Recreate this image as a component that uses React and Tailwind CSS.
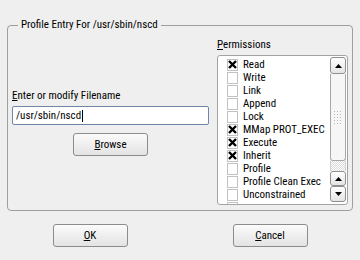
import React from "react";

const items = [
  ["Read", true],
  ["Write", false],
  ["Link", false],
  ["Append", false],
  ["Lock", false],
  ["MMap PROT_EXEC", true],
  ["Execute", true],
  ["Inherit", true],
  ["Profile", false],
  ["Profile Clean Exec", false],
  ["Unconstrained", false],
  ["", false],
];

function Check({ on }) {
  return (
    <div className="w-[11px] h-[12px] border border-[#c2c2c2] bg-white flex items-center justify-center shrink-0">
      {on && (
        <svg width="9" height="9" viewBox="0 0 9 9">
          <path d="M1 1L8 8M8 1L1 8" stroke="#000" strokeWidth="2.4" strokeLinecap="butt" />
        </svg>
      )}
    </div>
  );
}

function Arrow({ up }) {
  return (
    <svg width="7" height="4" viewBox="0 0 7 4">
      <polygon points={up ? "0,4 7,4 3.5,0" : "0,0 7,0 3.5,4"} fill="#000" />
    </svg>
  );
}

function Btn({ children, className = "" }) {
  return (
    <div
      className={
        "h-[23px] w-[75px] rounded-[3px] border border-[#8c8c8c] bg-gradient-to-b from-[#fbfbfb] to-[#e3e3e3] flex items-center justify-center " +
        className
      }
    >
      {children}
    </div>
  );
}

export default function App() {
  return (
    <div className="w-[360px] h-[260px] overflow-hidden bg-[#efefef] text-black text-[11px] leading-[13px] [font-family:'Roboto_Condensed','Liberation_Sans',sans-serif] pt-[19px] px-[7px]">
      <fieldset className="w-[346px] min-w-0 h-[192px] border border-[#9e9e9e] rounded-[4px] px-[4px] pb-[5px] m-0">
        <legend className="ml-[6px] px-[3px] leading-[12px]">Profile Entry For /usr/sbin/nscd</legend>
        <div className="flex h-full gap-[8px]">
          <div className="w-[197px] shrink-0 flex flex-col pt-[58px]">
            <div>
              <span className="underline">E</span>nter or modify Filename
            </div>
            <div className="mt-[4px] h-[19px] border border-[#6f86a6] rounded-[2px] bg-white flex items-center pl-[3px]">
              <span>/usr/sbin/nscd</span>
              <span className="ml-[1px] w-[1px] h-[12px] bg-black"></span>
            </div>
            <div className="mt-[8px] flex justify-center">
              <Btn className="w-[74px]">
                <span>
                  <span className="underline">B</span>rowse
                </span>
              </Btn>
            </div>
          </div>
          <div className="w-[131px] min-w-0 shrink-0 flex flex-col pt-[7px]">
            <div>
              <span className="underline">P</span>ermissions
            </div>
            <div className="mt-[4px] flex-1 min-h-0 border border-[#a3a3a3] rounded-[3px] bg-white flex overflow-hidden">
              <div className="flex-1 min-w-0 overflow-hidden pt-[2px] pl-[9px]">
                {items.map(([label, on], i) => (
                  <div key={i} className="h-[13px] flex items-center whitespace-nowrap">
                    <Check on={on} />
                    <span className="ml-[5px]">{label}</span>
                  </div>
                ))}
              </div>
              <div className="w-[16px] shrink-0 mt-[1px] mb-[2px] mr-[1px] flex flex-col">
                <div className="h-[17px] rounded-[3px] border border-[#8f8f8f] bg-gradient-to-b from-white to-[#e4e4e4] flex items-center justify-center">
                  <Arrow up />
                </div>
                <div className="h-[87px] rounded-b-[3px] border border-t-0 border-[#a8a8a8] bg-[#f6f6f6] flex items-center justify-center">
                  <div className="w-[10px] h-[14px] bg-[radial-gradient(circle,#b5b5b5_0.7px,transparent_0.8px)] bg-[length:3px_3px]"></div>
                </div>
                <div className="flex-1 border-x border-[#d0d0d0] bg-[repeating-conic-gradient(#dcdcdc_0_25%,#ffffff_0_50%)] bg-[length:2px_2px]"></div>
                <div className="h-[15px] rounded-[3px] border border-[#8f8f8f] bg-gradient-to-b from-white to-[#e4e4e4] flex items-center justify-center">
                  <Arrow up />
                </div>
                <div className="h-[16px] rounded-[3px] border border-[#8f8f8f] bg-gradient-to-b from-white to-[#e4e4e4] flex items-center justify-center">
                  <Arrow />
                </div>
              </div>
            </div>
          </div>
        </div>
      </fieldset>
      <div className="grid grid-cols-2 mt-[13px] -mx-[7px]">
        <div className="flex justify-center">
          <Btn>
            <span>
              <span className="underline">O</span>K
            </span>
          </Btn>
        </div>
        <div className="flex justify-center">
          <Btn>
            <span>
              <span className="underline">C</span>ancel
            </span>
          </Btn>
        </div>
      </div>
    </div>
  );
}
